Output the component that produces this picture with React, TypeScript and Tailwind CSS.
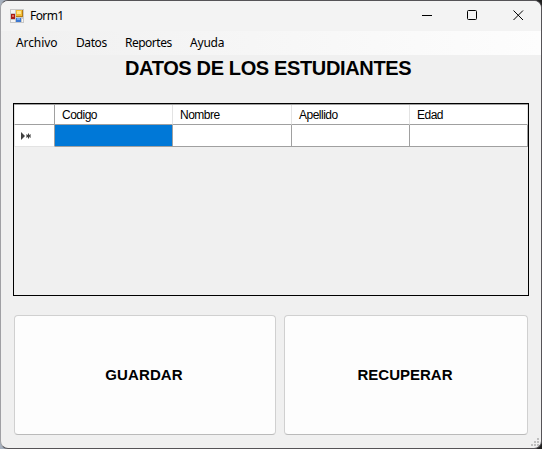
const menu = [
  { label: 'Archivo', cls: 'w-[60px] tracking-[-0.1px]' },
  { label: 'Datos', cls: 'w-[49px] tracking-[-0.4px]' },
  { label: 'Reportes', cls: 'w-[65px] tracking-[-0.5px]' },
  { label: 'Ayuda', cls: 'tracking-[-0.2px]' },
];

const columns = ['Codigo', 'Nombre', 'Apellido', 'Edad'];

function FormIcon() {
  return (
    <svg width="14" height="14" viewBox="0 0 14 14" shapeRendering="crispEdges">
      <rect width="14" height="14" fill="#c8c8c8" />
      <path d="M1 1h4v3H1zM1 11h4v2H1zM12 10h1v3h-1z" fill="#f5f5f5" />
      <rect x="6" y="1" width="7" height="7" fill="#b77b12" />
      <rect x="6" y="1" width="6" height="6" fill="#f2bd37" />
      <rect x="7" y="2" width="4" height="3" fill="#ffe58a" />
      <rect x="1" y="5" width="4" height="5" fill="#a91b15" />
      <rect x="2" y="6" width="2" height="2" fill="#e26b5c" />
      <rect x="6" y="9" width="5" height="4" fill="#3c78d2" />
      <rect x="7" y="9" width="3" height="2" fill="#78aaf0" />
    </svg>
  );
}

function TitleBar() {
  return (
    <header className="flex h-[30px] shrink-0 items-center bg-[#f3f3f3] pl-[9px]">
      <FormIcon />
      <span className="ml-[6px] text-[12px] leading-none tracking-[-0.6px]">Form1</span>
      <svg className="ml-auto" width="130" height="30" fill="none" stroke="#000">
        <path d="M11 14.5h10" shapeRendering="crispEdges" />
        <rect x="56.5" y="9.5" width="9" height="9" rx="1" />
        <path d="M102.5 9.5l9.5 9.5M112 9.5L102.5 19" />
      </svg>
    </header>
  );
}

function MenuBar() {
  return (
    <nav className="flex h-6 shrink-0 items-center bg-linear-to-r from-[#f0f0f0] to-[#fdfdfd] pl-[15px] text-[12px]">
      {menu.map((m) => (
        <span key={m.label} className={m.cls}>{m.label}</span>
      ))}
    </nav>
  );
}

function DataGrid() {
  return (
    <section className="mt-[22px] ml-3 h-[193px] w-[516px] shrink-0 border border-black">
      <div className="grid grid-cols-[41px_118px_119px_118px_118px] grid-rows-[20px_22px] border-t border-[#a0a0a0] font-['Liberation_Sans',sans-serif] text-[12px]">
        <div className="border-r border-b border-l border-[#a0a0a0] border-l-[#e3e3e3] bg-white" />
        {columns.map((c) => (
          <div key={c} className="flex items-center border-r border-b border-r-[#e3e3e3] border-b-[#a0a0a0] bg-white pt-px pl-[7px] tracking-[-0.5px]">
            {c}
          </div>
        ))}
        <div className="flex items-center border-r border-b border-l border-[#e3e3e3] border-r-[#a0a0a0] bg-white pl-[6px]">
          <svg width="12" height="8" fill="#404040">
            <path d="M0 0L4 4L0 8z" />
            <path d="M7.5 1.5v5M5.2 2.7l4.6 2.6M5.2 5.3l4.6-2.6" stroke="#404040" strokeWidth="1.1" />
          </svg>
        </div>
        <div className="border-r border-b border-[#a0a0a0] bg-[#0078d7]" />
        <div className="border-r border-b border-[#a0a0a0] bg-white" />
        <div className="border-r border-b border-[#a0a0a0] bg-white" />
        <div className="border-r border-b border-[#a0a0a0] bg-white" />
      </div>
    </section>
  );
}

export default function App() {
  return (
    <div className="h-[449px] w-[542px] overflow-hidden bg-linear-to-r from-[#a8b2c0] via-[#282828] via-20% to-[#202020] font-['Noto_Sans',sans-serif] text-black">
      <main className="relative flex h-full w-full flex-col overflow-hidden rounded-lg border border-[#555357] border-l-[#a0a0a4] bg-[#f0f0f0]">
        <TitleBar />
        <MenuBar />
        <h1 className="ml-[124px] h-[26px] shrink-0 font-['Liberation_Sans',sans-serif] text-[20px] leading-[27px] font-bold tracking-[-0.36px] whitespace-nowrap">
          DATOS DE LOS ESTUDIANTES
        </h1>
        <DataGrid />
        <div className="mt-[19px] ml-[13px] flex h-[120px] shrink-0 gap-2 font-['Liberation_Sans',sans-serif] text-[15px] font-bold">
          <button className="w-[262px] rounded-[4px] border border-[#d0d0d0] border-b-[#bababa] bg-[#fdfdfd] pr-[2px] tracking-[0.1px]">GUARDAR</button>
          <button className="w-[244px] rounded-[4px] border border-[#d0d0d0] border-b-[#bababa] bg-[#fdfdfd] pr-[2px]">RECUPERAR</button>
        </div>
        <svg className="absolute right-[2px] bottom-[2px]" width="8" height="8" fill="#bfbfbf" shapeRendering="crispEdges">
          <path d="M6 0h2v2H6zM3 3h2v2H3zM6 3h2v2H6zM0 6h2v2H0zM3 6h2v2H3zM6 6h2v2H6z" />
        </svg>
      </main>
    </div>
  );
}
